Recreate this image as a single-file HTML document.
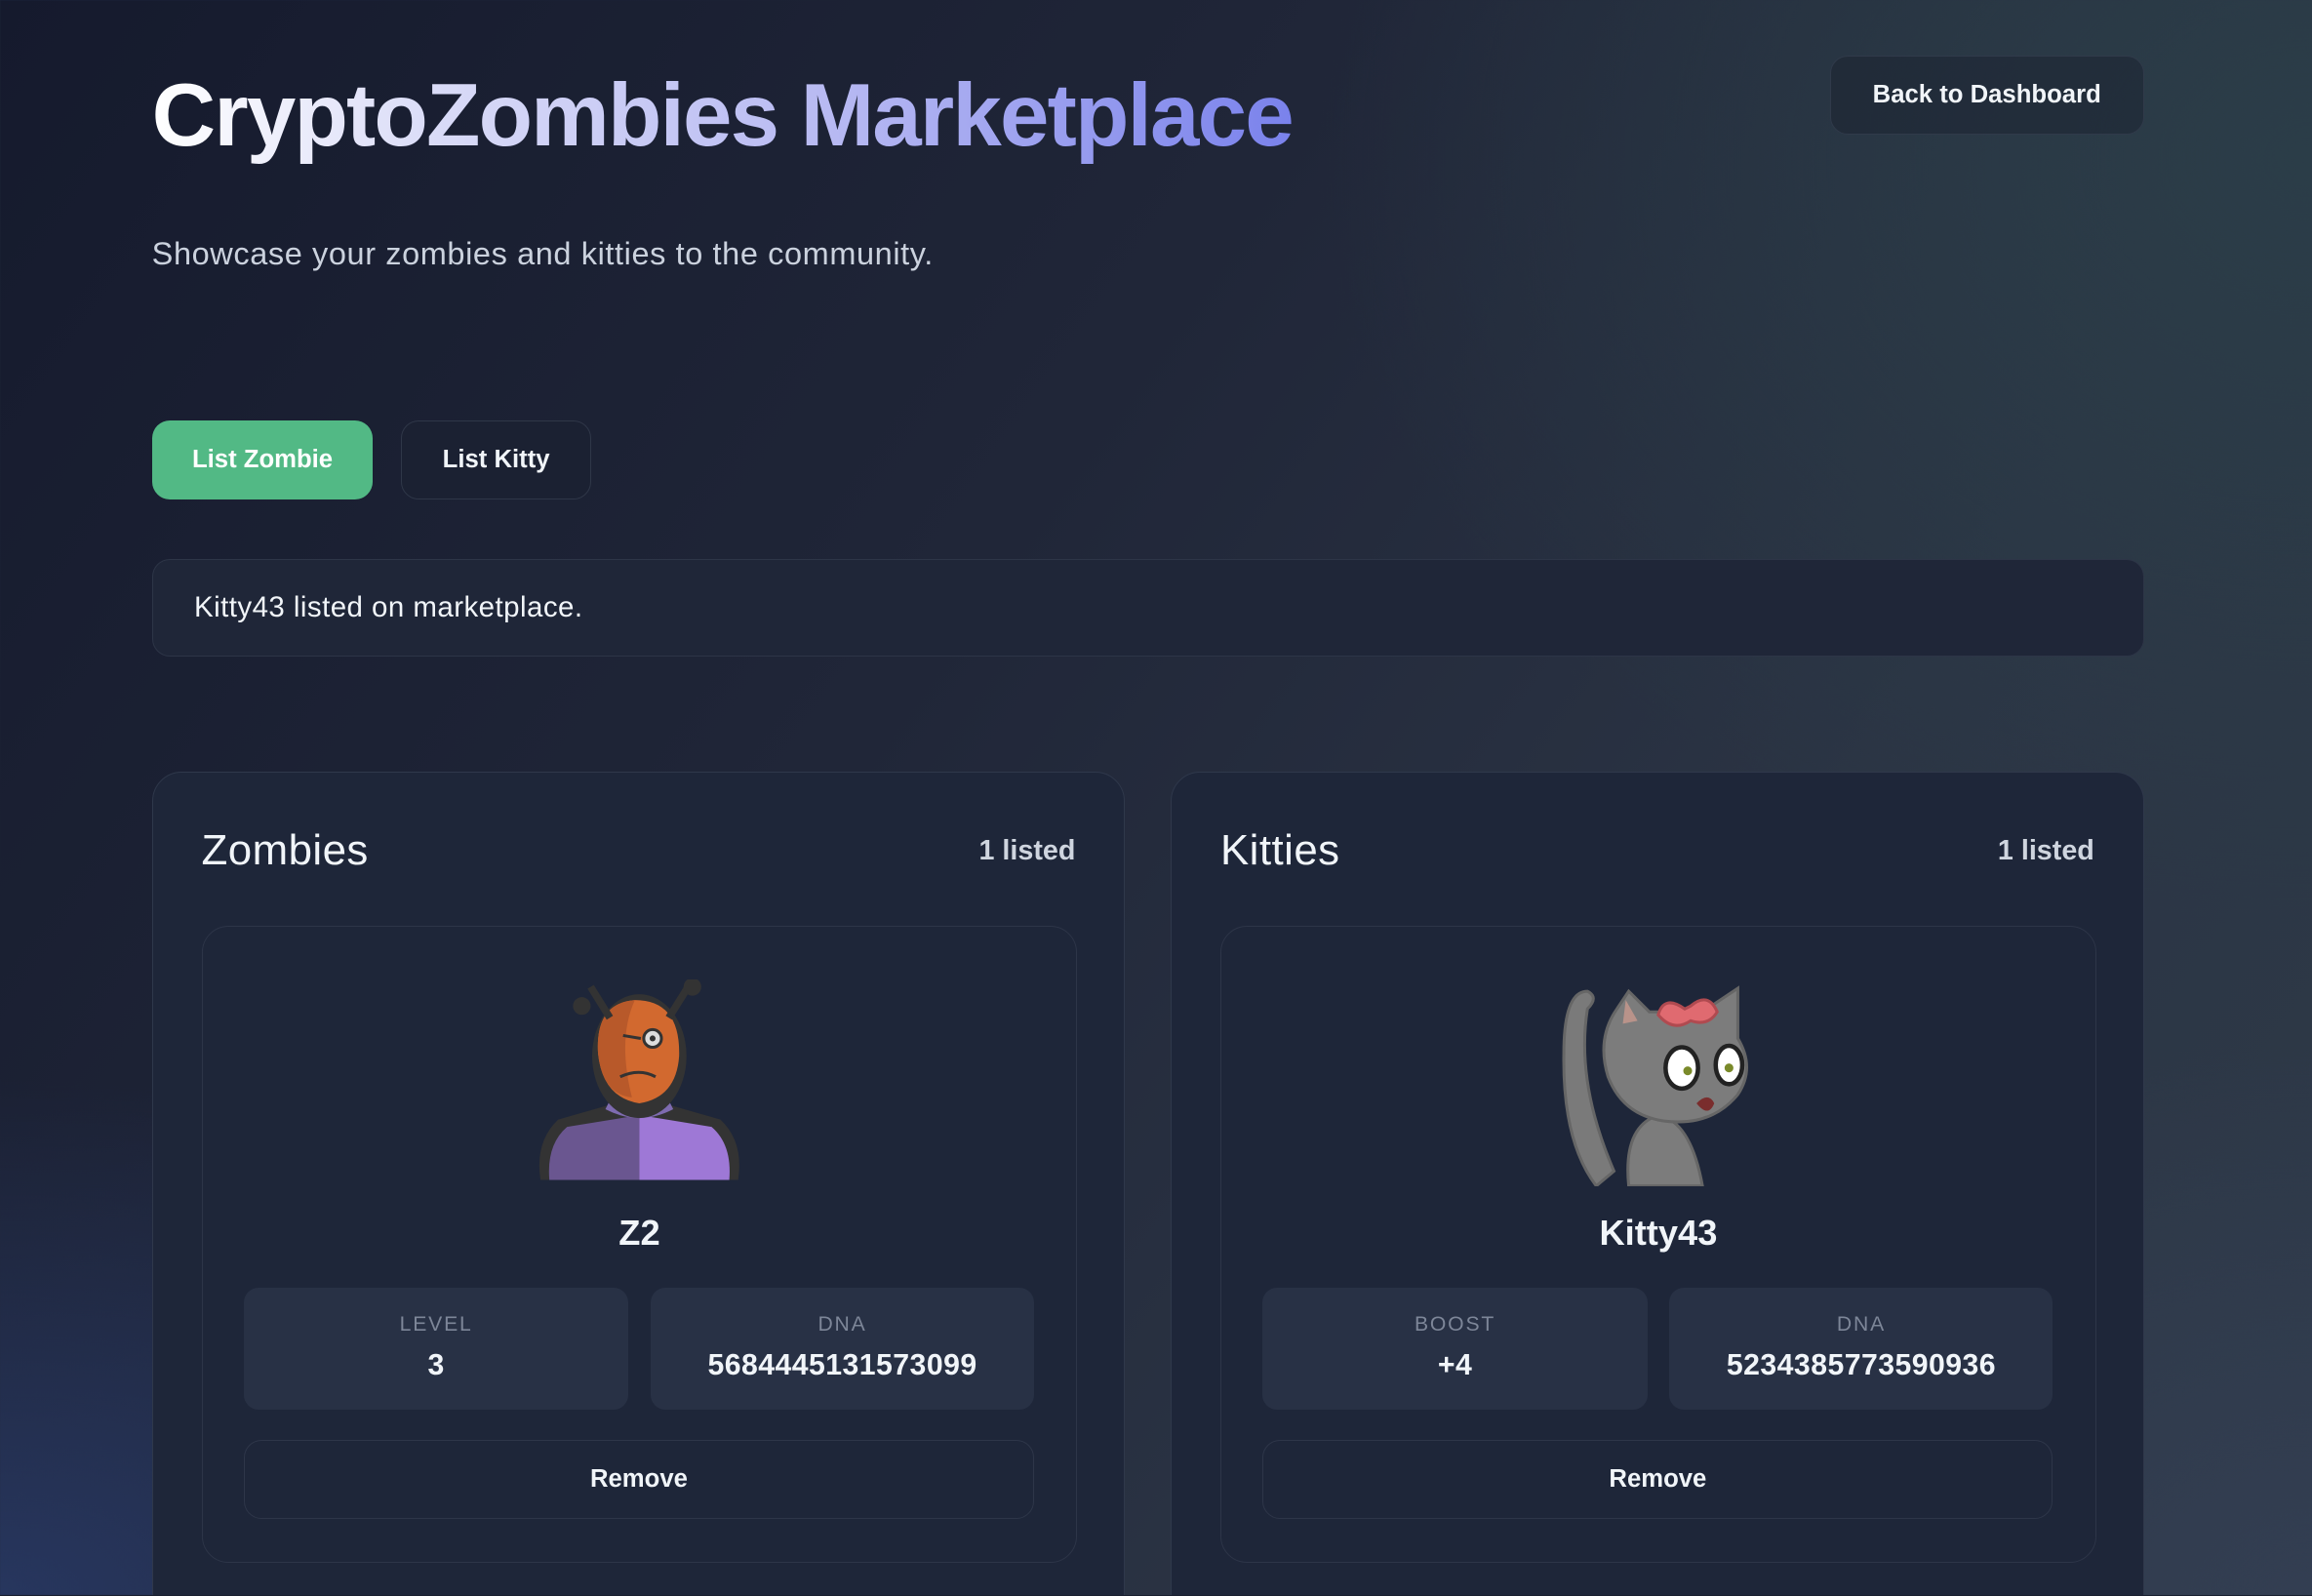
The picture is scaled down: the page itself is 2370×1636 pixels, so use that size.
<!DOCTYPE html>
<html><head><meta charset="utf-8"><style>
html{zoom:1.5115;overflow:hidden;background:#1a2030}
*{box-sizing:border-box;margin:0;padding:0}
body{overflow:hidden;font-family:"Liberation Sans",sans-serif;color:#f1f5f9}
.page{width:1568px;height:1082px;overflow:hidden;position:relative;
background:radial-gradient(ellipse 900px 500px at 0% 100%,#27365e 0%,rgba(39,54,94,0) 70%),
radial-gradient(ellipse 900px 700px at 100% 10%,#2b3d48 0%,rgba(43,61,72,0) 75%),
radial-gradient(ellipse 700px 500px at 100% 100%,#333e52 0%,rgba(51,62,82,0) 75%),
linear-gradient(125deg,#151a2d 0%,#202638 40%,#2b3444 70%,#2e3a48 100%)}
h1{position:absolute;left:103px;top:44px;font-size:60px;font-weight:700;letter-spacing:-1.2px;
background:linear-gradient(90deg,#ffffff 0%,#d9dbf7 25%,#b7b9f2 60%,#7a82ec 100%);-webkit-background-clip:text;background-clip:text;color:transparent}
.back{position:absolute;left:1241px;top:38px;width:213px;height:53px;border:1px solid #303a4a;border-radius:12px;background:rgba(24,30,44,0.45);display:flex;align-items:center;justify-content:center;font-weight:700;font-size:17px}
.sub{position:absolute;left:103px;top:160px;font-size:21.5px;letter-spacing:0.4px;color:#cbd2de}
.btn{position:absolute;top:285px;height:54px;border-radius:12px;display:flex;align-items:center;justify-content:center;font-weight:700;font-size:17px}
.b1{left:103px;width:150px;background:#52b985;color:#fff}
.b2{left:272px;width:129px;border:1px solid #2f3748;background:#1b2132}
.notice{position:absolute;left:103px;top:379px;width:1351px;height:66px;border:1px solid #2d3547;border-radius:12px;background:#1f2638;padding-left:28px;display:flex;align-items:center;font-size:19.5px;letter-spacing:0.3px}
.panel{position:absolute;top:523px;width:660px;height:600px;border:1px solid #2f384b;border-radius:20px;background:#1e2639}
.ph{position:absolute;left:33px;right:33px;top:37px;display:flex;justify-content:space-between;align-items:center}
.ph .t{font-size:29px;letter-spacing:0.3px}
.ph .c{font-size:19px;font-weight:700;color:#cfd5df}
.card{position:absolute;left:33px;top:104px;width:594px;height:432px;border:1px solid #2d3548;border-radius:18px;background:#1e2639}
.img{position:absolute;left:0;right:0;top:36px;height:136px;display:flex;justify-content:center}
.name{position:absolute;left:0;right:0;top:194px;text-align:center;font-size:24px;font-weight:700}
.stat{position:absolute;top:245px;height:83px;border-radius:10px;background:#283145;text-align:center}
.stat .l{margin-top:17px;font-size:14px;letter-spacing:1.2px;color:#7d8698}
.stat .v{margin-top:9px;font-size:20px;font-weight:700;letter-spacing:0.3px}
.s1{left:28px;width:261px}.s2{left:304px;width:260px}
.rm{position:absolute;left:28px;top:348px;width:536px;height:54px;border:1px solid #2e3649;border-radius:12px;display:flex;align-items:center;justify-content:center;font-weight:700;font-size:17px}
</style></head><body><div class="page">
<h1>CryptoZombies Marketplace</h1>
<div class="back">Back to Dashboard</div>
<div class="sub">Showcase your zombies and kitties to the community.</div>
<div class="btn b1">List Zombie</div>
<div class="btn b2">List Kitty</div>
<div class="notice">Kitty43 listed on marketplace.</div>

<div class="panel" style="left:103px">
 <div class="ph"><span class="t">Zombies</span><span class="c">1 listed</span></div>
 <div class="card">
  <div class="img"><svg width="150" height="136" viewBox="0 0 150 136">
   <path d="M8 136 Q4 110 20 95 L55 85 L95 85 L130 95 Q146 110 142 136Z" fill="#333"/>
   <path d="M14 136 Q12 112 26 100 L75 92 L75 136Z" fill="#6a5690"/>
   <path d="M75 92 L124 100 Q138 112 136 136 L75 136Z" fill="#9e78d6"/>
   <path d="M52 88 Q75 100 98 88 L95 82 L55 82Z" fill="#7e6bb0"/>
   <ellipse cx="75" cy="52" rx="32" ry="42" fill="#333"/>
   <path d="M47 50 Q45 16 72 14 Q103 14 102 52 Q100 80 75 84 Q50 80 47 50Z" fill="#d2692f"/>
   <path d="M47 50 Q45 16 72 14 Q60 40 70 80 Q50 78 47 50Z" fill="#b8592a"/>
   <circle cx="84" cy="40" r="6" fill="#ddd" stroke="#333" stroke-width="2"/><circle cx="84" cy="40" r="2" fill="#333"/>
   <path d="M64 38 L76 40" stroke="#333" stroke-width="2"/>
   <path d="M62 66 Q75 60 86 66" stroke="#333" stroke-width="2" fill="none"/>
   <path d="M55 26 L42 5 M95 26 L110 2" stroke="#333" stroke-width="5"/>
   <circle cx="36" cy="18" r="6" fill="#333"/><circle cx="111" cy="5" r="6" fill="#333"/>
  </svg></div>
  <div class="name">Z2</div>
  <div class="stat s1"><div class="l">LEVEL</div><div class="v">3</div></div>
  <div class="stat s2"><div class="l">DNA</div><div class="v">5684445131573099</div></div>
  <div class="rm">Remove</div>
 </div>
</div>

<div class="panel" style="left:794px">
 <div class="ph"><span class="t">Kitties</span><span class="c">1 listed</span></div>
 <div class="card">
  <div class="img"><svg width="140" height="140" viewBox="0 0 140 140">
   <path d="M28 140 Q5 110 6 50 Q6 8 22 8 Q30 12 22 20 Q14 70 40 130Z" fill="#7a7a7a" stroke="#666" stroke-width="2"/>
   <path d="M50 140 Q46 100 70 92 Q92 96 100 140Z" fill="#7c7c7c" stroke="#666" stroke-width="2"/>
   <path d="M42 20 L50 8 L64 22 L100 22 L124 6 L124 40 Q136 60 124 78 Q106 100 74 96 Q46 92 36 66 Q28 40 42 20Z" fill="#7c7c7c" stroke="#666" stroke-width="2"/>
   <path d="M48 14 L56 28 L46 30Z" fill="#b9938a"/>
   <ellipse cx="86" cy="60" rx="11" ry="14" fill="#fff" stroke="#222" stroke-width="3"/>
   <ellipse cx="118" cy="58" rx="9" ry="13" fill="#fff" stroke="#222" stroke-width="3"/>
   <circle cx="90" cy="62" r="3" fill="#7a8a2a"/><circle cx="118" cy="60" r="3" fill="#7a8a2a"/>
   <path d="M96 84 Q104 76 108 84 Q104 94 96 84Z" fill="#7a2d2d"/>
   <path d="M70 24 Q74 10 88 20 L92 18 Q104 8 110 22 Q104 32 92 28 Q80 36 70 24Z" fill="#e06a70" stroke="#b04a50" stroke-width="2"/>
  </svg></div>
  <div class="name">Kitty43</div>
  <div class="stat s1"><div class="l">BOOST</div><div class="v">+4</div></div>
  <div class="stat s2"><div class="l">DNA</div><div class="v">5234385773590936</div></div>
  <div class="rm">Remove</div>
 </div>
</div>
</div></body></html>
